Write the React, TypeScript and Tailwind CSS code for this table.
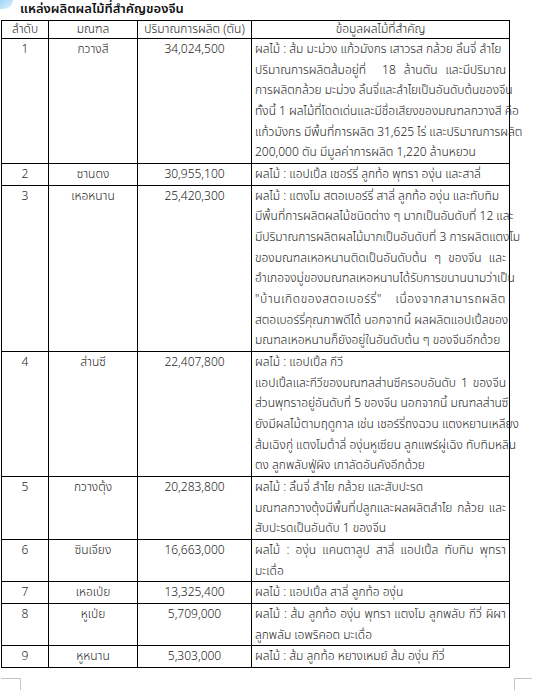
import React from 'react';

type Row = {
  no: string;
  province: string;
  amount: string;
  // paragraphs -> lines; every line but the last of a paragraph is justified
  info: string[][];
};

const rows: Row[] = [
  {
    no: '1',
    province: 'กวางสี',
    amount: '34,024,500',
    info: [
      ['ผลไม้ : ส้ม มะม่วง แก้วมังกร เสาวรส กล้วย ลิ้นจี่ ลำไย'],
      [
        'ปริมาณการผลิตส้มอยู่ที่  18 ล้านตัน และมีปริมาณ',
        'การผลิตกล้วย มะม่วง ลิ้นจี่และลำไยเป็นอันดับต้นของจีน',
        'ทั้งนี้ 1 ผลไม้ที่โดดเด่นและมีชื่อเสียงของมณฑลกวางสี คือ',
        'แก้วมังกร มีพื้นที่การผลิต 31,625 ไร่ และปริมาณการผลิต',
        '200,000 ตัน มีมูลค่าการผลิต 1,220 ล้านหยวน',
      ],
    ],
  },
  {
    no: '2',
    province: 'ซานตง',
    amount: '30,955,100',
    info: [['ผลไม้ : แอปเปิ้ล เชอร์รี่ ลูกท้อ พุทรา องุ่น และสาลี่']],
  },
  {
    no: '3',
    province: 'เหอหนาน',
    amount: '25,420,300',
    info: [
      ['ผลไม้ : แตงโม สตอเบอร์รี่ สาลี่ ลูกท้อ องุ่น และทับทิม'],
      [
        'มีพื้นที่การผลิตผลไม้ชนิดต่าง ๆ มากเป็นอันดับที่ 12 และ',
        'มีปริมาณการผลิตผลไม้มากเป็นอันดับที่ 3 การผลิตแตงโม',
        'ของมณฑลเหอหนานติดเป็นอันดับต้น ๆ ของจีน และ',
        'อำเภอจงมู่ของมณฑลเหอหนานได้รับการขนานนามว่าเป็น',
        '"บ้านเกิดของสตอเบอร์รี่" เนื่องจากสามารถผลิต',
        'สตอเบอร์รี่คุณภาพดีได้ นอกจากนี้ ผลผลิตแอปเปิ้ลของ',
        'มณฑลเหอหนานก็ยังอยู่ในอันดับต้น ๆ ของจีนอีกด้วย',
      ],
    ],
  },
  {
    no: '4',
    province: 'ส่านซี',
    amount: '22,407,800',
    info: [
      ['ผลไม้ : แอปเปิ้ล กีวี'],
      [
        'แอปเปิ้ลและกีวีของมณฑลส่านซีครอบอันดับ 1 ของจีน',
        'ส่วนพุทราอยู่อันดับที่ 5 ของจีน นอกจากนี้ มณฑลส่านซี',
        'ยังมีผลไม้ตามฤดูกาล เช่น เชอร์รี่ถงฉวน แตงหยานเหลียง',
        'ส้มเฉิงกู่ แตงโมต้าลี่ องุ่นหูเซียน ลูกแพร์ผู่เฉิง ทับทิมหลิน',
        'ตง ลูกพลับฟู่ผิง เกาลัดอันคังอีกด้วย',
      ],
    ],
  },
  {
    no: '5',
    province: 'กวางตุ้ง',
    amount: '20,283,800',
    info: [
      ['ผลไม้ : ลิ้นจี่ ลำไย กล้วย และสับปะรด'],
      ['มณฑลกวางตุ้งมีพื้นที่ปลูกและผลผลิตลำไย กล้วย และ', 'สับปะรดเป็นอันดับ 1 ของจีน'],
    ],
  },
  {
    no: '6',
    province: 'ซินเจียง',
    amount: '16,663,000',
    info: [['ผลไม้ : องุ่น แคนตาลูป สาลี่ แอปเปิ้ล ทับทิม พุทรา', 'มะเดื่อ']],
  },
  {
    no: '7',
    province: 'เหอเป่ย',
    amount: '13,325,400',
    info: [['ผลไม้ : แอปเปิ้ล สาลี่ ลูกท้อ องุ่น']],
  },
  {
    no: '8',
    province: 'หูเป่ย',
    amount: '5,709,000',
    info: [['ผลไม้ : ส้ม ลูกท้อ องุ่น พุทรา แตงโม ลูกพลับ กีวี่ ผิผา', 'ลูกพลัม เอพริคอต มะเดื่อ']],
  },
  {
    no: '9',
    province: 'หูหนาน',
    amount: '5,303,000',
    info: [['ผลไม้ : ส้ม ลูกท้อ หยางเหมย์ ส้ม องุ่น กีวี่']],
  },
];

const cell = 'border border-black align-top leading-[20.67px]';

// the one line the source spreads out letter by letter
const spread = '"บ้านเกิดของสตอเบอร์รี่" เนื่องจากสามารถผลิต';

export default function App() {
  return (
    <div className="relative min-h-[694px] w-[534px] bg-white text-[12px] font-light text-[#1c1c1c] [font-family:Tahoma,'Noto_Sans_Thai','Loma','Garuda','Liberation_Sans',sans-serif]">
      {/* corner decoration */}
      <div className="absolute left-0 top-0 h-[9px] w-[13px] rounded-br-[14px] bg-gradient-to-br from-[#9fd3f5] to-[#e3f3fd]" />

      <div className="pl-[20px] h-[20px] leading-[19px] text-[13px] font-semibold text-[#111]">แหล่งผลิตผลไม้ที่สำคัญของจีน</div>

      <table className="ml-[1px] border-collapse table-fixed w-[509px]">
        <colgroup>
          <col className="w-[47px]" />
          <col className="w-[89px]" />
          <col className="w-[114px]" />
          <col />
        </colgroup>
        <thead>
          <tr>
            <th className="border border-black font-light leading-[17px] text-center">ลำดับ</th>
            <th className="border border-black font-light leading-[17px] text-center">มณฑล</th>
            <th className="border border-black font-light leading-[17px] text-center">ปริมาณการผลิต (ตัน)</th>
            <th className="border border-black font-light leading-[17px] text-center">ข้อมูลผลไม้ที่สำคัญ</th>
          </tr>
        </thead>
        <tbody>
          {rows.map((r) => (
            <tr key={r.no}>
              <td className={`${cell} text-center`}>{r.no}</td>
              <td className={`${cell} text-center`}>{r.province}</td>
              <td className={`${cell} text-center`}>{r.amount}</td>
              <td className={`${cell} pl-[3px] pr-[3px]`}>
                {r.info.map((para, pi) => (
                  <div key={pi}>
                    {para.map((line, li) => (
                      <div
                        key={li}
                        className={
                          li < para.length - 1
                            ? line === spread
                              ? 'whitespace-pre tracking-[0.6px] text-justify [text-align-last:justify]'
                              : 'whitespace-pre text-justify [text-align-last:justify]'
                            : 'whitespace-pre'
                        }
                      >
                        {line}
                      </div>
                    ))}
                  </div>
                ))}
              </td>
            </tr>
          ))}
        </tbody>
      </table>

      {/* page corner marks */}
      <div className="mt-[10px] flex justify-between pl-[1px] pr-[2px]">
        <div className="h-[12px] w-[20px] border-t border-r border-[#c4c4c4]" />
        <div className="h-[12px] w-[18px] border-t border-l border-[#c4c4c4]" />
      </div>
    </div>
  );
}
